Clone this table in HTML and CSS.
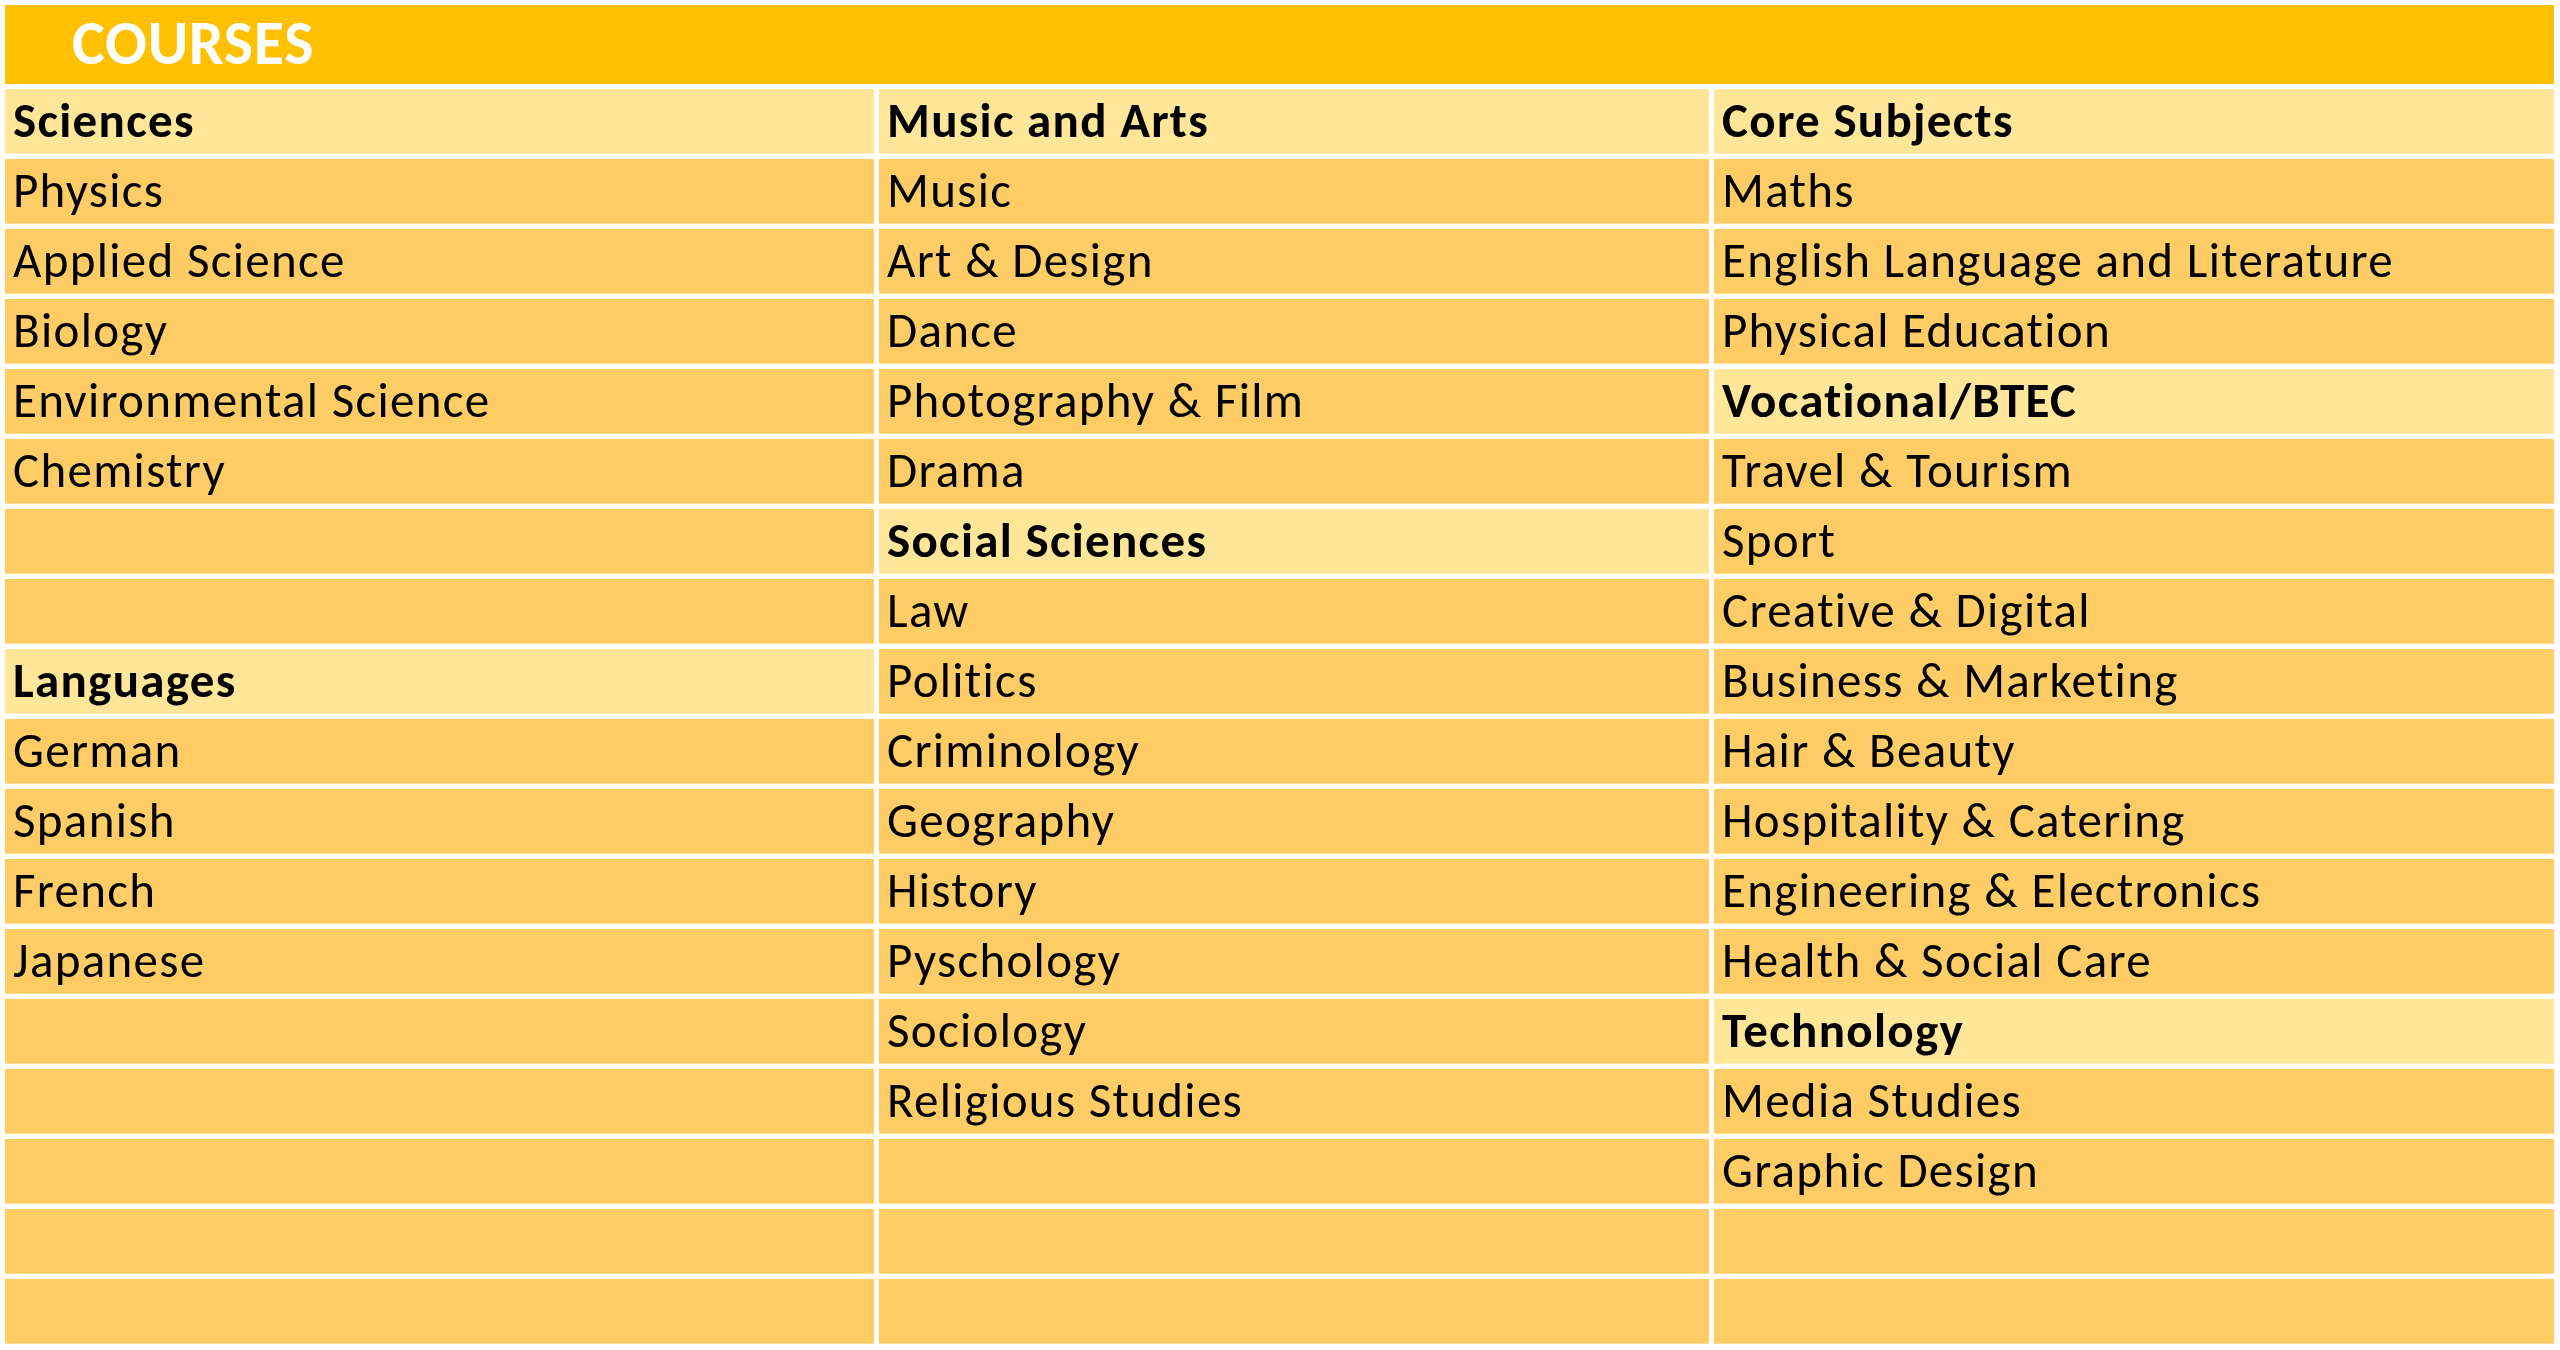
FILE: index.html
```html
<!DOCTYPE html>
<html lang="en">
<head>
<meta charset="utf-8">
<title>Courses</title>
<link rel="stylesheet" href="styles.css">
</head>
<body>
<div class="sheet">
  <div class="banner">COURSES</div>

  <div class="cell head">Sciences</div>
  <div class="cell head">Music and Arts</div>
  <div class="cell head">Core Subjects</div>

  <div class="cell">Physics</div>
  <div class="cell">Music</div>
  <div class="cell">Maths</div>

  <div class="cell">Applied Science</div>
  <div class="cell">Art &amp; Design</div>
  <div class="cell">English Language and Literature</div>

  <div class="cell">Biology</div>
  <div class="cell">Dance</div>
  <div class="cell">Physical Education</div>

  <div class="cell">Environmental Science</div>
  <div class="cell">Photography &amp; Film</div>
  <div class="cell head">Vocational/BTEC</div>

  <div class="cell">Chemistry</div>
  <div class="cell">Drama</div>
  <div class="cell">Travel &amp; Tourism</div>

  <div class="cell"></div>
  <div class="cell head">Social Sciences</div>
  <div class="cell">Sport</div>

  <div class="cell"></div>
  <div class="cell">Law</div>
  <div class="cell">Creative &amp; Digital</div>

  <div class="cell head">Languages</div>
  <div class="cell">Politics</div>
  <div class="cell">Business &amp; Marketing</div>

  <div class="cell">German</div>
  <div class="cell">Criminology</div>
  <div class="cell">Hair &amp; Beauty</div>

  <div class="cell">Spanish</div>
  <div class="cell">Geography</div>
  <div class="cell">Hospitality &amp; Catering</div>

  <div class="cell">French</div>
  <div class="cell">History</div>
  <div class="cell">Engineering &amp; Electronics</div>

  <div class="cell">Japanese</div>
  <div class="cell">Pyschology</div>
  <div class="cell">Health &amp; Social Care</div>

  <div class="cell"></div>
  <div class="cell">Sociology</div>
  <div class="cell head">Technology</div>

  <div class="cell"></div>
  <div class="cell">Religious Studies</div>
  <div class="cell">Media Studies</div>

  <div class="cell"></div>
  <div class="cell"></div>
  <div class="cell">Graphic Design</div>

  <div class="cell"></div>
  <div class="cell"></div>
  <div class="cell"></div>

  <div class="cell"></div>
  <div class="cell"></div>
  <div class="cell"></div>
</div>
</body>
</html>
```

FILE: styles.css
```css
html, body {
  margin: 0;
  padding: 0;
  background: #ffffff;
}

body {
  padding: 5px 0 0 5px;
  font-family: "Carlito", "Lato", "Liberation Sans", sans-serif;
  color: #000000;
}

.sheet {
  display: grid;
  grid-template-columns: 869px 830px 840px;
  grid-template-rows: 79px;
  grid-auto-rows: 65px;
  gap: 5px;
  width: 2549px;
}

.banner {
  grid-column: 1 / -1;
  background: #ffc000;
  color: #ffffff;
  font-weight: 700;
  font-size: 62px;
  letter-spacing: 0.7px;
  line-height: 77px;
  padding-left: 67px;
  box-sizing: border-box;
}

.cell {
  background: #ffcc66;
  font-size: 49px;
  letter-spacing: 1.3px;
  font-variant-ligatures: none;
  line-height: 63px;
  padding-left: 8px;
  box-sizing: border-box;
  border-bottom: 1px solid #ffdc8f;
  white-space: nowrap;
  overflow: hidden;
}

.cell.head {
  background: #ffe699;
  font-weight: 700;
  border-bottom-color: #ffeeb8;
}
```
